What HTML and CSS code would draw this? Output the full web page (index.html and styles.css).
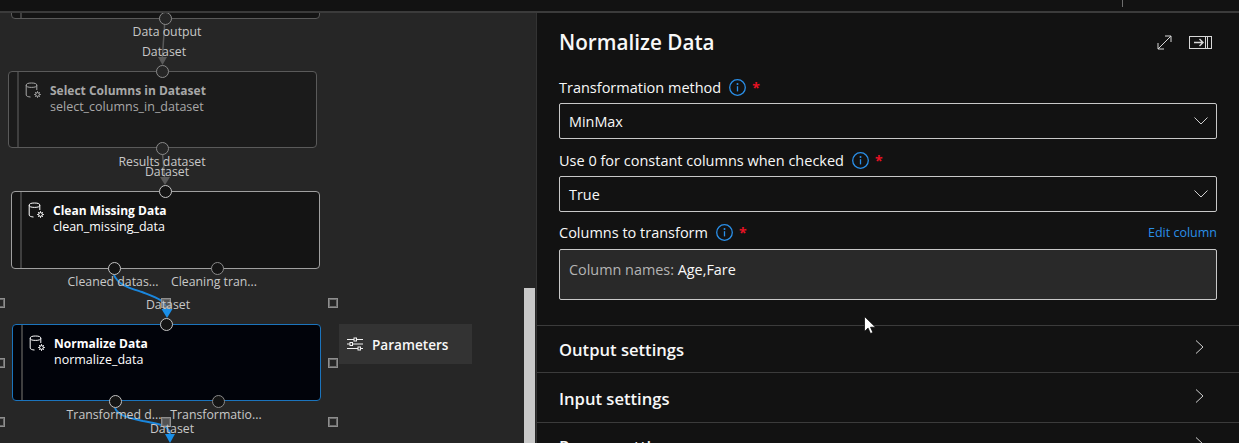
FILE: index.html
```html
<!DOCTYPE html>
<html lang="en">
<head>
    <meta charset="UTF-8">
    <meta name="viewport" content="width=device-width, initial-scale=1.0">
    <title>Normalize Data</title>
    <link rel="stylesheet" href="styles.css">
</head>
<body>

<svg width="0" height="0" class="defs">
    <defs>
        <g id="db-icon" fill="none" stroke="currentColor" stroke-width="1">
            <ellipse cx="6.5" cy="3.2" rx="5.3" ry="2.2"/>
            <path d="M1.2 3.2V13c0 1.2 2 1.9 4.3 2M11.8 3.2V8"/>
            <circle cx="12.5" cy="12.5" r="1.9"/>
            <path d="M12.5 9.2v1.4M12.5 14.4v1.4M9.2 12.5h1.4M14.4 12.5h1.4M10.2 10.2l1 1M13.8 13.8l1 1M10.2 14.8l1-1M13.8 11.2l1-1"/>
        </g>
        <g id="info-icon" fill="none">
            <circle cx="8.5" cy="8.5" r="7.8" stroke="#2a8fe8" stroke-width="1.3"/>
            <path d="M8.5 7.2v5.2" stroke="#2a8fe8" stroke-width="1.3"/>
            <circle cx="8.5" cy="5" r="1" fill="#2a8fe8"/>
        </g>
        <path id="chev-down" d="M.5 .5L7 7l6.5-6.5" fill="none" stroke="#d0d0d0" stroke-width="1"/>
        <path id="chev-right" d="M1 .5L8 7l-7 6.5" fill="none" stroke="#d0d0d0" stroke-width="1"/>
    </defs>
</svg>

<div class="topbar"><span class="topbar-tick"></span></div>

<div class="main">
    <div class="canvas">
        <!-- lines between the nodes -->
        <svg class="wires" width="536" height="443">
            <g fill="none" stroke="#5a5a5a" stroke-width="1.5">
                <path d="M165 19L162 62"/>
                <path d="M162 148L165 182"/>
            </g>
            <path d="M158 57l4.500 8 4.500-8z" fill="#5a5a5a"/>
            <path d="M160 177l5 8 5-8z" fill="#5a5a5a"/>
            <g fill="none" stroke="#1a86dc" stroke-width="2">
                <path d="M114 275C118 285 130 288 142 292C155 297 167 300 167 312"/>
                <path d="M115 408C118 416 130 418 143 421C158 424 170 424 170 436"/>
            </g>
            <path d="M161.500 309l5.500 9 5.500-9z" fill="#1a8fe8"/>
            <path d="M165 434l5 9 5-9z" fill="#1a8fe8"/>
        </svg>

        <div class="node node-top"></div>

        <div class="node node-dim node-select">
            <svg class="node-icon" width="18" height="18"><use href="#db-icon"/></svg>
            <div class="node-title">Select Columns in Dataset</div>
            <div class="node-sub">select_columns_in_dataset</div>
        </div>

        <div class="node node-clean">
            <svg class="node-icon" width="18" height="18"><use href="#db-icon"/></svg>
            <div class="node-title">Clean Missing Data</div>
            <div class="node-sub">clean_missing_data</div>
        </div>

        <div class="node node-selected">
            <svg class="node-icon" width="18" height="18"><use href="#db-icon"/></svg>
            <div class="node-title">Normalize Data</div>
            <div class="node-sub">normalize_data</div>
        </div>

        <span class="port port-dim" style="left:165px;top:18px"></span>
        <span class="port port-dim" style="left:162px;top:71px"></span>
        <span class="port port-dim" style="left:162px;top:148px"></span>
        <span class="port" style="left:165px;top:191px"></span>
        <span class="port" style="left:114px;top:268px"></span>
        <span class="port port-dark" style="left:217px;top:268px"></span>
        <span class="port" style="left:166px;top:324px"></span>
        <span class="port" style="left:115px;top:401px"></span>
        <span class="port port-dark" style="left:218px;top:401px"></span>

        <span class="handle" style="left:-5px;top:298px"></span>
        <span class="handle handle-mid" style="left:161px;top:298px"></span>
        <span class="handle" style="left:328px;top:298px"></span>
        <span class="handle" style="left:-5px;top:358px"></span>
        <span class="handle" style="left:328px;top:358px"></span>
        <span class="handle" style="left:-5px;top:417px"></span>
        <span class="handle handle-mid" style="left:161px;top:417px"></span>
        <span class="handle" style="left:328px;top:417px"></span>

        <span class="port-label" style="left:167px;top:31px">Data output</span>
        <span class="port-label" style="left:164px;top:51px">Dataset</span>
        <span class="port-label" style="left:162px;top:161px">Results dataset</span>
        <span class="port-label" style="left:167px;top:171px">Dataset</span>
        <span class="port-label" style="left:113px;top:281px">Cleaned datas...</span>
        <span class="port-label" style="left:214px;top:281px">Cleaning tran...</span>
        <span class="port-label" style="left:168px;top:304px">Dataset</span>
        <span class="port-label" style="left:114px;top:414px">Transformed d...</span>
        <span class="port-label" style="left:216px;top:414px">Transformatio...</span>
        <span class="port-label" style="left:172px;top:428px">Dataset</span>

        <div class="param-btn">
            <svg width="16" height="14" viewBox="0 0 16 14" fill="none" stroke="#f2f2f2" stroke-width="1">
                <path d="M0 2.500h16M0 7h16M0 11.500h16"/>
                <rect x="7" y="1" width="2.500" height="3" fill="#333"/>
                <rect x="3" y="5.500" width="2.500" height="3" fill="#333"/>
                <rect x="11" y="10" width="2.500" height="3" fill="#333"/>
            </svg>
            <span>Parameters</span>
        </div>

        <div class="scrollbar"></div>
    </div>

    <div class="panel">
        <div class="panel-body">
            <div class="panel-head">
                <h2>Normalize Data</h2>
                <div class="panel-tools">
                    <svg width="15" height="15" viewBox="0 0 15 15" fill="none" stroke="#d8d8d8" stroke-width="1">
                        <path d="M1 14L14 1M8 1h6v6M1 8v6h6"/>
                    </svg>
                    <svg width="23" height="13" viewBox="0 0 23 13" fill="none" stroke="#d8d8d8" stroke-width="1">
                        <rect x=".5" y=".5" width="22" height="12"/>
                        <path d="M16.500 .5v12M18.500 .5v12" />
                        <path d="M5 6.500h9M10.500 3l3.500 3.500-3.500 3.500" stroke-width="1.400"/>
                    </svg>
                </div>
            </div>

            <div class="field-label">
                <span>Transformation method</span>
                <svg class="info" width="17" height="17"><use href="#info-icon"/></svg>
                <span class="req">*</span>
            </div>
            <div class="select">
                <span>MinMax</span>
                <svg width="14" height="8"><use href="#chev-down"/></svg>
            </div>

            <div class="field-label">
                <span>Use 0 for constant columns when checked</span>
                <svg class="info" width="17" height="17"><use href="#info-icon"/></svg>
                <span class="req">*</span>
            </div>
            <div class="select">
                <span>True</span>
                <svg width="14" height="8"><use href="#chev-down"/></svg>
            </div>

            <div class="field-label field-label-last">
                <span>Columns to transform</span>
                <svg class="info" width="17" height="17"><use href="#info-icon"/></svg>
                <span class="req">*</span>
                <a class="edit-link">Edit column</a>
            </div>
            <div class="columns-box">
                <span class="columns-key">Column names:</span> Age,Fare
            </div>
        </div>

        <div class="section section-first">
            <span>Output settings</span>
            <svg class="section-chev" width="10" height="15"><use href="#chev-right"/></svg>
        </div>
        <div class="section">
            <span>Input settings</span>
            <svg class="section-chev" width="10" height="15"><use href="#chev-right"/></svg>
        </div>
        <div class="section section-last">
            <span>Param settings</span>
            <svg class="section-chev" width="10" height="15"><use href="#chev-right"/></svg>
        </div>

        <!-- mouse pointer -->
        <svg class="cursor" width="13" height="18" viewBox="0 0 13 18">
            <path d="M.5 .5v15l3.600-3.400 2.400 5.400 2.400-1-2.400-5.300h5z" fill="#fff" stroke="#000" stroke-width=".7"/>
        </svg>
    </div>
</div>

</body>
</html>
```

FILE: styles.css
```css
* {
    box-sizing: border-box;
}
html, body {
    height: 100%;
}
body {
    margin: 0;
    background: #121212;
    color: #f8f8f8;
    font-family: "Open Sans", "Noto Sans", Arial, sans-serif;
    font-size: 13px;
    overflow: hidden;
}
.defs {
    position: absolute;
}
.topbar {
    height: 13px;
    background: #121212;
    border-bottom: 2px solid #3b3b3b;
    position: relative;
}
.topbar-tick {
    position: absolute;
    left: 1122px;
    top: 0;
    width: 1px;
    height: 7px;
    background: #6e6e6e;
}
.main {
    display: flex;
    height: 430px;
    overflow: hidden;
}

/* left side: graph canvas */
.canvas {
    width: 536px;
    flex: none;
    background: #262626;
    position: relative;
    overflow: hidden;
    margin-top: -13px;
    height: 443px;
    clip-path: inset(13px 0 0 0);
}
.wires {
    position: absolute;
    left: 0;
    top: 0;
}
.node {
    position: absolute;
    width: 309px;
    height: 78px;
    background: #141414;
    border: 1px solid #7a7a7a;
    border-radius: 4px;
    padding: 11px 0 0 41px;
    color: #fff;
}
.node::before {
    content: "";
    position: absolute;
    left: 8px;
    top: 0;
    bottom: 0;
    width: 2px;
    background: #3f3f3f;
}
.node-icon {
    position: absolute;
    left: 16px;
    top: 10px;
}
.node-title {
    font-weight: 700;
    font-size: 12px;
    line-height: 16px;
}
.node-sub {
    font-size: 12.5px;
    line-height: 16px;
}
.node-top {
    left: 11px;
    top: -59px;
    border-color: #5a5a5a;
}
.node-select {
    left: 8px;
    top: 71px;
    height: 77px;
    border-color: #5a5a5a;
    background: #1b1b1b;
}
.node-dim {
    color: #a8a8a8;
}
.node-clean {
    left: 11px;
    top: 191px;
    border-color: #a0a0a0;
}
.node-selected {
    left: 12px;
    top: 324px;
    height: 77px;
    border-color: #1b74bd;
    background: #01030a;
}
.port {
    position: absolute;
    width: 13px;
    height: 13px;
    margin: -6.5px 0 0 -6.5px;
    border-radius: 50%;
    border: 1px solid #c4c4c4;
    background: #141414;
}
.port-dim {
    border-color: #8a8a8a;
    background: #262626;
}
.port-dark {
    border-color: #8a8a8a;
    background: #141414;
}
.port-label {
    position: absolute;
    transform: translate(-50%, -50%);
    font-size: 12.3px;
    color: #c8c8c8;
    white-space: nowrap;
}
.handle {
    position: absolute;
    width: 10px;
    height: 10px;
    border: 1px solid #8e8e8e;
    box-shadow: inset 0 0 0 1px #6a6a6a;
    background: #262626;
}
.handle-mid {
    background: rgba(120, 120, 120, 0.55);
}
.param-btn {
    position: absolute;
    left: 339px;
    top: 324px;
    width: 133px;
    height: 40px;
    background: #333;
    display: flex;
    align-items: center;
    gap: 9px;
    padding-left: 8px;
    font-weight: 600;
    font-size: 13.6px;
}
.scrollbar {
    position: absolute;
    left: 524px;
    top: 288px;
    width: 11px;
    height: 155px;
    background: #c8c8c8;
}

/* right side: properties panel */
.panel {
    flex: 1;
    position: relative;
    border-left: 1px solid #333;
    background: #121212;
}
.panel-body {
    padding: 0 22px 0 22px;
    height: 312px;
}
.panel-head {
    height: 60px;
    padding-bottom: 2px;
    display: flex;
    justify-content: space-between;
    align-items: center;
}
.panel-head h2 {
    margin: 0;
    font-size: 20.7px;
    font-weight: 600;
}
.panel-tools {
    display: flex;
    align-items: center;
    gap: 17px;
    padding-right: 5px;
}
.field-label {
    display: flex;
    align-items: center;
    height: 30px;
    padding-bottom: 2px;
    font-size: 14.5px;
}
.field-label-last {
    padding-bottom: 4px;
}
.info {
    margin-left: 8px;
}
.req {
    color: #e81123;
    margin-left: 6px;
    font-size: 14px;
    font-weight: 700;
}
.edit-link {
    margin-left: auto;
    color: #2a8fe8;
    font-size: 12.5px;
}
.select {
    height: 36px;
    margin-bottom: 7px;
    border: 1px solid #c8c8c8;
    border-radius: 2px;
    display: flex;
    align-items: center;
    justify-content: space-between;
    padding: 0 8px 0 9px;
    font-size: 14.4px;
}
.columns-box {
    height: 51px;
    background: #292929;
    border: 1px solid #c8c8c8;
    border-radius: 2px;
    padding: 10px 9px;
    font-size: 14.4px;
}
.columns-key {
    color: #b4b4b4;
}
.section {
    height: 50px;
    padding: 1px 34px 0 22px;
    border-top: 1px solid #3b3b3b;
    display: flex;
    align-items: center;
    justify-content: space-between;
    font-size: 16.6px;
    font-weight: 600;
}
.section-first {
    height: 47px;
    padding-top: 0;
}
.section-last {
    height: 46px;
}
.section-chev {
    margin-top: -3px;
}
.cursor {
    position: absolute;
    left: 327px;
    top: 303px;
}
```
